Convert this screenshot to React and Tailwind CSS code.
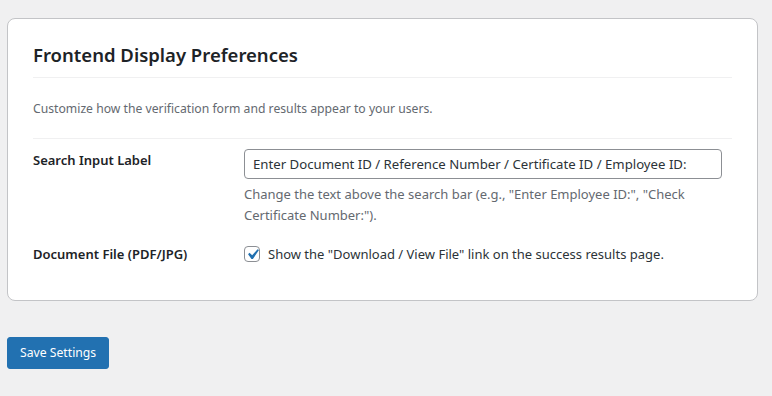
import React, { useState } from 'react';

const font = { fontFamily: '"Segoe UI", "Noto Sans", sans-serif' };

const App = () => {
  const [label, setLabel] = useState('Enter Document ID / Reference Number / Certificate ID / Employee ID:');
  const [showFile, setShowFile] = useState(true);

  return (
    <div className="min-h-screen bg-[#f0f0f1] pt-[18px] pl-[7px] pr-[14px]" style={font}>
      <div className="bg-white border border-[#c3c4c7] rounded-[8px] px-[25px] pt-[22px] pb-[36px] w-[751px]">
        <h2 className="text-[18.5px] leading-[28px] font-semibold text-[#1d2327] pb-[8px] border-b border-[#f0f0f1]">
          Frontend Display Preferences
        </h2>

        <p className="text-[12.2px] leading-[20px] text-[#646970] pt-[21px] pb-[19px] border-b border-[#f0f0f1]">
          Customize how the verification form and results appear to your users.
        </p>

        <div className="flex pt-[10px]">
          <div className="w-[211px] shrink-0 text-[13px] leading-[20px] pt-[1px] font-semibold text-[#1d2327]">
            Search Input Label
          </div>
          <div className="w-[478px]">
            <input
              value={label}
              onChange={(e) => setLabel(e.target.value)}
              className="w-full h-[30px] border border-[#8c8f94] rounded-[4px] px-[8px] text-[13.2px] text-[#2c3338] outline-none"
              style={font}
            />
            <p className="text-[13px] leading-[21px] text-[#646970] mt-[5px]">
              Change the text above the search bar (e.g., "Enter Employee ID:", "Check Certificate Number:").
            </p>
          </div>
        </div>

        <div className="flex pt-[18px]">
          <div className="w-[211px] shrink-0 text-[13px] leading-[20px] font-semibold text-[#1d2327]">
            Document File (PDF/JPG)
          </div>
          <label className="flex items-center gap-[8px] text-[13px] leading-[20px] text-[#2c3338] cursor-pointer">
            <span
              onClick={() => setShowFile(!showFile)}
              className="w-[16px] h-[16px] border border-[#8c8f94] rounded-[4px] flex items-center justify-center bg-white overflow-visible"
            >
              {showFile && (
                <svg viewBox="0 0 20 20" width="21" height="21" className="shrink-0 -m-[3px]">
                  <path d="M14.83 4.89l1.34.94-5.81 8.38H9.02L5.78 9.67l1.34-1.25 2.57 2.4z" fill="#2271b1" />
                </svg>
              )}
            </span>
            Show the "Download / View File" link on the success results page.
          </label>
        </div>
      </div>

      <button className="mt-[36px] bg-[#2271b1] text-white text-[12.2px] rounded-[3px] h-[32px] px-[12px] border border-[#2271b1]" style={font}>
        Save Settings
      </button>
    </div>
  );
};

export default App;
